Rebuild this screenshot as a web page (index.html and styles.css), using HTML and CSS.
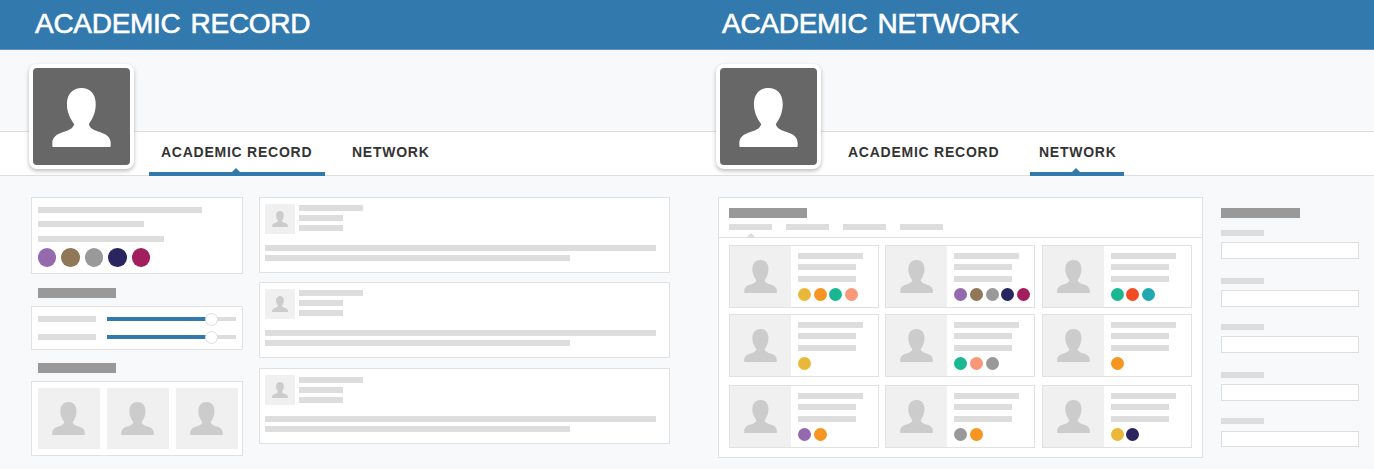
FILE: index.html
```html
<!DOCTYPE html>
<html lang="en">
<head>
<meta charset="utf-8">
<title>Academic Record and Network</title>
<link rel="stylesheet" href="styles.css">
</head>
<body>
<svg class="defs" aria-hidden="true">
  <symbol id="person" viewBox="156 264 178 176" preserveAspectRatio="none">
    <path d="M245 264C269 264 288 280 288 312C288 340 276 360 267 372C271 386 286 391 300 395C322 402 333 412 333 428V437Q333 440 330 440H160Q157 440 157 437V428C157 412 168 402 190 395C204 391 219 386 223 372C214 360 201 340 201 312C201 280 221 264 245 264Z"/>
  </symbol>
</svg>
<main class="page">
  <section class="screen">
    <header class="banner"><h1 class="title">ACADEMIC RECORD</h1></header>
    <div class="hero"></div>
    <nav class="tabs">
      <div class="avatar"><svg class="person"><use href="#person"/></svg></div>
      <a class="tab tab-record active">ACADEMIC RECORD</a>
      <a class="tab tab-network">NETWORK</a>
    </nav>
    <div class="content record">
      <aside class="side">
        <div class="card summary">
          <div class="bar w164"></div><div class="bar w106"></div><div class="bar w126"></div>
          <div class="dots large"><i class="dot purple"></i><i class="dot brown"></i><i class="dot grey"></i><i class="dot navy"></i><i class="dot magenta"></i></div>
        </div>
        <div class="heading"></div>
        <div class="card skills">
          <div class="skill"><div class="bar w58"></div><div class="slider"><div class="fill"></div><div class="thumb"></div></div></div>
          <div class="skill"><div class="bar w58"></div><div class="slider"><div class="fill"></div><div class="thumb"></div></div></div>
        </div>
        <div class="heading"></div>
        <div class="card people">
          <div class="tile"><svg class="person"><use href="#person"/></svg></div>
          <div class="tile"><svg class="person"><use href="#person"/></svg></div>
          <div class="tile"><svg class="person"><use href="#person"/></svg></div>
        </div>
      </aside>
      <div class="feed">
        <article class="card post">
          <div class="author"><div class="tile small"><svg class="person"><use href="#person"/></svg></div><div class="meta"><div class="bar w64"></div><div class="bar w44"></div><div class="bar w44"></div></div></div>
          <div class="bar w392"></div><div class="bar w305"></div>
        </article>
        <article class="card post">
          <div class="author"><div class="tile small"><svg class="person"><use href="#person"/></svg></div><div class="meta"><div class="bar w64"></div><div class="bar w44"></div><div class="bar w44"></div></div></div>
          <div class="bar w392"></div><div class="bar w305"></div>
        </article>
        <article class="card post last">
          <div class="author"><div class="tile small"><svg class="person"><use href="#person"/></svg></div><div class="meta"><div class="bar w64"></div><div class="bar w44"></div><div class="bar w44"></div></div></div>
          <div class="bar w392"></div><div class="bar w305"></div>
        </article>
      </div>
    </div>
  </section>

  <section class="screen">
    <header class="banner"><h1 class="title">ACADEMIC NETWORK</h1></header>
    <div class="hero"></div>
    <nav class="tabs">
      <div class="avatar"><svg class="person"><use href="#person"/></svg></div>
      <a class="tab tab-record">ACADEMIC RECORD</a>
      <a class="tab tab-network active">NETWORK</a>
    </nav>
    <div class="content network">
      <div class="card directory">
        <div class="directory-head">
          <div class="heading"></div>
          <div class="filters"><div class="bar w43 selected"></div><div class="bar w43"></div><div class="bar w43"></div><div class="bar w43"></div></div>
        </div>
        <div class="members">
          <div class="member"><div class="photo"><svg class="person"><use href="#person"/></svg></div><div class="info"><div class="bar w65"></div><div class="bar w58"></div><div class="bar w58"></div><div class="dots"><i class="dot yellow"></i><i class="dot orange"></i><i class="dot green"></i><i class="dot salmon"></i></div></div></div>
          <div class="member"><div class="photo"><svg class="person"><use href="#person"/></svg></div><div class="info"><div class="bar w65"></div><div class="bar w58"></div><div class="bar w58"></div><div class="dots"><i class="dot purple"></i><i class="dot brown"></i><i class="dot grey"></i><i class="dot navy"></i><i class="dot magenta"></i></div></div></div>
          <div class="member"><div class="photo"><svg class="person"><use href="#person"/></svg></div><div class="info"><div class="bar w65"></div><div class="bar w58"></div><div class="bar w58"></div><div class="dots"><i class="dot green"></i><i class="dot red"></i><i class="dot teal"></i></div></div></div>
          <div class="member"><div class="photo"><svg class="person"><use href="#person"/></svg></div><div class="info"><div class="bar w65"></div><div class="bar w58"></div><div class="bar w58"></div><div class="dots"><i class="dot yellow"></i></div></div></div>
          <div class="member"><div class="photo"><svg class="person"><use href="#person"/></svg></div><div class="info"><div class="bar w65"></div><div class="bar w58"></div><div class="bar w58"></div><div class="dots"><i class="dot green"></i><i class="dot salmon"></i><i class="dot grey"></i></div></div></div>
          <div class="member"><div class="photo"><svg class="person"><use href="#person"/></svg></div><div class="info"><div class="bar w65"></div><div class="bar w58"></div><div class="bar w58"></div><div class="dots"><i class="dot orange"></i></div></div></div>
          <div class="member"><div class="photo"><svg class="person"><use href="#person"/></svg></div><div class="info"><div class="bar w65"></div><div class="bar w58"></div><div class="bar w58"></div><div class="dots"><i class="dot purple"></i><i class="dot orange"></i></div></div></div>
          <div class="member"><div class="photo"><svg class="person"><use href="#person"/></svg></div><div class="info"><div class="bar w65"></div><div class="bar w58"></div><div class="bar w58"></div><div class="dots"><i class="dot grey"></i><i class="dot orange"></i></div></div></div>
          <div class="member"><div class="photo"><svg class="person"><use href="#person"/></svg></div><div class="info"><div class="bar w65"></div><div class="bar w58"></div><div class="bar w58"></div><div class="dots"><i class="dot yellow"></i><i class="dot navy"></i></div></div></div>
        </div>
      </div>
      <form class="search">
        <div class="heading"></div>
        <div class="field tall"><div class="bar w43"></div><div class="input"></div></div>
        <div class="field"><div class="bar w43"></div><div class="input"></div></div>
        <div class="field tall"><div class="bar w43"></div><div class="input"></div></div>
        <div class="field"><div class="bar w43"></div><div class="input"></div></div>
        <div class="field end"><div class="bar w43"></div><div class="input"></div></div>
      </form>
    </div>
  </section>
</main>
</body>
</html>
```
FILE: styles.css
```css
* { box-sizing: border-box; }
body { margin: 0; background: #fff; font-family: "Liberation Sans", Arial, sans-serif; overflow: hidden; }
.defs { position: absolute; width: 0; height: 0; }
.page { display: grid; grid-template-columns: 687px 687px; height: 469px; background: #f8f9fb; }

.banner { height: 50px; padding-left: 35px; background: #3279ae; border-bottom: 1px solid #5893bf; }
.title { margin: 0; color: #fff; font-size: 28px; font-weight: 400; line-height: 47px; letter-spacing: -.28px; word-spacing: 2.5px; white-space: nowrap; -webkit-text-stroke: 0.6px #fff; }
.hero { height: 81px; }

.tabs { display: flex; height: 45px; padding-left: 29px; background: #fff; border-top: 1px solid #dcdee0; border-bottom: 1px solid #dcdee0; }
.avatar { display: flex; justify-content: center; width: 105px; height: 105px; margin-top: -68px; padding-top: 20px; background: #676767; border: 4px solid #fff; border-radius: 8px; box-shadow: 0 2px 4px rgba(0,0,0,.27); }
.avatar .person { width: 59px; height: 59px; fill: #fff; }
.tab { position: relative; height: 44px; color: #333; font-size: 14px; font-weight: 700; line-height: 41px; letter-spacing: .75px; white-space: nowrap; }
.tab-record { width: 176px; margin-left: 15px; padding-left: 12px; }
.tab-network { width: 94px; margin-left: 18px; padding-left: 9px; }
.tab.active { border-bottom: 4px solid #3279ae; }
.tab.active::after { content: ""; position: absolute; left: 50%; bottom: 0; margin-left: -5px; border: 4px solid transparent; border-top: 0; border-bottom-color: #3279ae; }

.content { display: flex; padding-top: 21px; }
.card { background: #fff; border: 1px solid #e0e1e3; }
.bar { height: 6px; background: #ddd; }
.heading { width: 78px; height: 10px; background: #999; }
.person { display: block; width: 33px; height: 33px; fill: #ccc; }
.w43 { width: 43px; } .w44 { width: 44px; } .w58 { width: 58px; }
.w64 { width: 64px; } .w65 { width: 65px; } .w106 { width: 106px; }
.w126 { width: 126px; } .w164 { width: 164px; } .w305 { width: 305px; } .w392 { width: 391px; }

.dots { display: flex; gap: 2.6px; }
.dot { width: 13px; height: 13px; border-radius: 50%; flex: none; }
.dots.large { gap: 5px; margin-left: -.4px; }
.large .dot { width: 18.5px; height: 18.5px; }
.purple { background: #9469ae; } .brown { background: #8f7757; } .grey { background: #999; }
.navy { background: #2a255f; } .magenta { background: #a21e5c; } .yellow { background: #eab839; }
.orange { background: #f69522; } .green { background: #19b892; } .salmon { background: #f89879; }
.red { background: #f24c23; } .teal { background: #23a8b2; }

.record { padding-left: 31px; gap: 16px; }
.side { width: 212px; }
.summary { height: 77px; padding: 9px 6px; }
.summary .bar + .bar { margin-top: 8px; }
.summary .bar:nth-child(3) { margin-top: 9px; }
.summary .dots { margin-top: 6px; }
.side .heading { margin: 14px 0 8px 7px; }
.skills { display: flex; flex-direction: column; gap: 12px; height: 44px; padding: 9px 6px; }
.skill { display: flex; align-items: center; gap: 11px; height: 6px; }
.slider { position: relative; width: 129px; height: 4px; background: #ddd; }
.fill { width: 105px; height: 4px; background: #3279ae; }
.thumb { position: absolute; top: -4.5px; left: 98px; width: 13px; height: 13px; border: 1px solid #ddd; border-radius: 50%; background: #fff; }
.skills + .heading { margin-top: 13px; }
.people { display: flex; gap: 7px; height: 75px; padding: 6px; }
.tile { display: flex; width: 62px; height: 61px; padding: 14px 0 0 14px; background: #f0f0f0; flex: none; }
.tile.small { width: 30px; height: 30px; padding: 7px 0 0 7px; }
.small .person { width: 16px; height: 16px; }

.feed { display: flex; flex-direction: column; width: 411px; }
.post { height: 76px; padding: 6px 5px; }
.post + .post { margin-top: 9px; }
.post.last { margin-top: 10px; }
.author { display: flex; gap: 4px; height: 41px; }
.meta { display: flex; flex-direction: column; gap: 4px; padding-top: 1px; }
.post > .bar + .bar { margin-top: 4px; }
.last .meta { padding-top: 2px; }

.network { padding-left: 31px; }
.directory { width: 485px; height: 261px; }
.directory-head { height: 40px; padding: 10px; border-bottom: 1px solid #e0e1e3; }
.filters { display: flex; gap: 14px; margin-top: 6px; }
.selected { position: relative; }
.selected::after { content: ""; position: absolute; left: 18px; top: 9px; border: 4px solid transparent; border-top: 0; border-bottom-color: #ddd; }
.members { display: grid; grid-template-columns: repeat(3, 150px); grid-template-rows: 63px 63px 63px; column-gap: 6.4px; padding: 7px 10px; }
.member { display: flex; height: 63px; background: #fff; border: 1px solid #e0e1e1; }
.member:nth-child(n+4) { margin-top: 6px; }
.member:nth-child(n+7) { margin-top: 14px; }
.photo { display: flex; justify-content: center; width: 61px; padding-top: 14px; background: #f0f0f0; flex: none; }
.info { padding: 7px 0 0 7px; }
.info .bar + .bar { margin-top: 5px; }
.info .bar:nth-child(3) { margin-top: 6px; }
.info .dots { margin-top: 6px; }

.search { width: 138px; margin-left: 18px; padding-top: 11px; }
.search .heading { width: 79px; margin-bottom: 12px; }
.field { height: 46px; }
.field.tall { height: 48px; }
.input { height: 17px; margin-top: 6px; background: #fff; border: 1px solid #dcdee0; }
.end .input { margin-top: 7px; height: 16px; }
```
